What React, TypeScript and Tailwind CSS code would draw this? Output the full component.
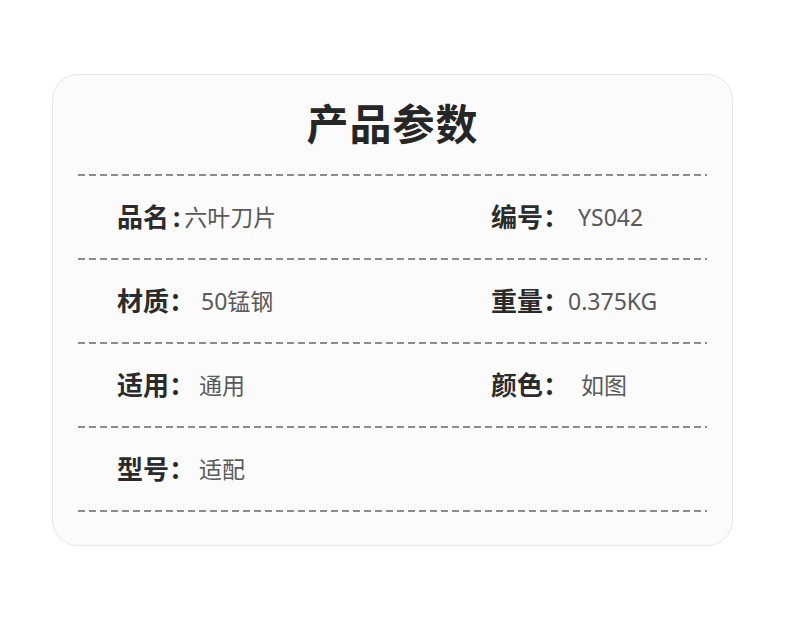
import React from "react";

const Dash = () => (
  <div className="h-[2px] w-full bg-[linear-gradient(to_right,#8c8c8c_0_7px,transparent_7px_11px)] bg-[length:11px_2px] bg-repeat-x" />
);

type Cell = { label: string; colon: string; value: string; gap: string };

const Item = ({ c }: { c: Cell | null }) =>
  c ? (
    <div className="flex items-center">
      <span className="text-[26px] font-bold text-[#2b2b2b] leading-none">
        {c.label}
        {c.colon === ":" ? <span className="ml-[4px]">:</span> : c.colon}
      </span>
      <span className={`text-[23px] text-[#595959] leading-none ${c.gap}`}>{c.value}</span>
    </div>
  ) : (
    <div />
  );

const rows: [Cell, Cell | null][] = [
  [
    { label: "品名", colon: ":", value: "六叶刀片", gap: "ml-[4px]" },
    { label: "编号", colon: "：", value: "YS042", gap: "ml-[9px]" },
  ],
  [
    { label: "材质", colon: "：", value: "50锰钢", gap: "ml-[6px]" },
    { label: "重量", colon: "：", value: "0.375KG", gap: "ml-[-1px]" },
  ],
  [
    { label: "适用", colon: "：", value: "通用", gap: "ml-[4px]" },
    { label: "颜色", colon: "：", value: "如图", gap: "ml-[12px]" },
  ],
  [{ label: "型号", colon: "：", value: "适配", gap: "ml-[4px]" }, null],
];

export default function App() {
  return (
    <div
      className="w-[790px] h-[618px] bg-white pt-[74px] pl-[52px]"
      style={{ fontFamily: '"Noto Sans", "Noto Sans CJK SC", sans-serif' }}
    >
      <div className="w-[681px] h-[472px] rounded-[26px] border border-[#e3e6ea] bg-[#fbfbfb] px-[25px] flex flex-col">
        <div className="h-[99px] flex items-center justify-center pb-[2px]">
          <h1 className="text-[42px] font-bold text-[#262626] leading-none tracking-[1px]">产品参数</h1>
        </div>
        <Dash />
        {rows.map((r, i) => (
          <React.Fragment key={i}>
            <div className="h-[82px] grid grid-cols-[374px_1fr] items-center pl-[39px]">
              <Item c={r[0]} />
              <Item c={r[1]} />
            </div>
            <Dash />
          </React.Fragment>
        ))}
      </div>
    </div>
  );
}
